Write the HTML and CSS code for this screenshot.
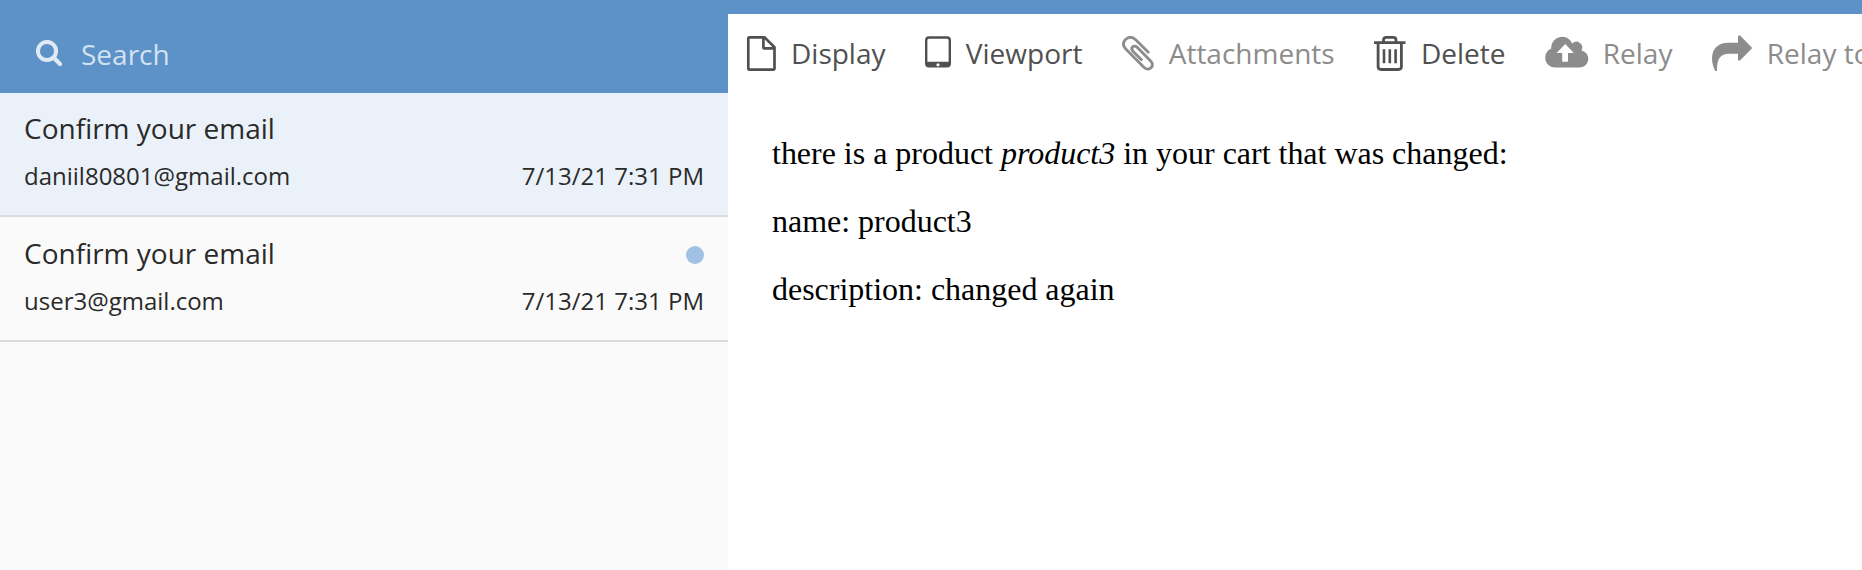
FILE: index.html
```html
<!DOCTYPE html>
<html lang="en">
<head>
<meta charset="utf-8">
<title>Mail</title>
<link rel="stylesheet" href="styles.css">
</head>
<body>
<div class="app">
  <aside class="sidebar">
    <div class="search">
      <svg class="search-icon" width="26" height="26" viewBox="0 0 26 26"><circle cx="11" cy="11" r="9.1" fill="none" stroke="currentColor" stroke-width="4"/><path d="M17.5 17.5L24 24" stroke="currentColor" stroke-width="4.2" stroke-linecap="round"/></svg>
      <span class="search-label">Search</span>
    </div>
    <div class="message selected">
      <div class="line"><span class="subject">Confirm your email</span></div>
      <div class="line meta"><span>daniil80801@gmail.com</span><span>7/13/21 7:31 PM</span></div>
    </div>
    <div class="message">
      <div class="line"><span class="subject">Confirm your email</span><span class="unread"></span></div>
      <div class="line meta"><span>user3@gmail.com</span><span>7/13/21 7:31 PM</span></div>
    </div>
  </aside>
  <main class="content">
    <nav class="toolbar">
      <div class="tool">
        <svg width="29" height="36" viewBox="0 0 29 36"><path d="M2.6 1.3H17.5L27.5 11.3V32.3Q27.5 33.6 26.2 33.6H2.6Q1.3 33.6 1.3 32.3V2.6Q1.3 1.3 2.6 1.3ZM16.4 1.5V11.4Q16.4 12.4 17.4 12.4H27.5" fill="none" stroke="currentColor" stroke-width="2.7"/></svg>
        <span>Display</span>
      </div>
      <div class="tool">
        <svg width="26" height="36" viewBox="0 0 26 36"><path fill="currentColor" fill-rule="evenodd" d="M4 .3H22Q26 .3 26 4.3V27.5Q26 31.5 22 31.5H4Q0 31.5 0 27.5V4.3Q0 .3 4 .3ZM4 2.7Q2.4 2.7 2.4 4.3V25.7H23.6V4.3Q23.6 2.7 22 2.7ZM13 27.2A1.6 1.6 0 1 0 13 30.4A1.6 1.6 0 1 0 13 27.2Z"/></svg>
        <span>Viewport</span>
      </div>
      <div class="tool muted">
        <svg width="32" height="36" viewBox="0 0 32 36"><path d="M27 17L14 4C10.5 .7 6.7.4 3.7 3.3C.6 6.4.9 10 3.8 12.9L21.6 30.9C24.3 33.6 27 33.8 29 31.8C31 29.8 30.8 27.2 28.2 24.6L15.4 11.6C13.6 9.8 11.8 9.7 10.7 10.8C9.4 12.1 9.6 13.9 11.2 15.5L20.2 24.6" fill="none" stroke="currentColor" stroke-width="2.8"/></svg>
        <span>Attachments</span>
      </div>
      <div class="tool">
        <svg width="32" height="36" viewBox="0 0 32 36"><path d="M0 6.7H31.5M9.5 6.7V4.2Q9.5 1.4 12.3 1.4H19.2Q22 1.4 22 4.2V6.7M4.1 7V30.5Q4.1 33.5 7.1 33.5H24.4Q27.4 33.5 27.4 30.5V7" fill="none" stroke="currentColor" stroke-width="2.8"/><path d="M10 13.3V27.3M15.8 13.3V27.3M21.6 13.3V27.3" fill="none" stroke="currentColor" stroke-width="2.6"/></svg>
        <span>Delete</span>
      </div>
      <div class="tool muted">
        <svg width="43" height="36" viewBox="0 0 43 36"><path fill="currentColor" fill-rule="evenodd" d="M10 31.6A10 10 0 0 1 6.2 12.4V11.4A11 11 0 0 1 27.3 7.4A5.8 5.8 0 0 1 36.4 14.4A8.7 8.7 0 0 1 34.3 31.6ZM20.3 8L11.5 17H17.2V25.8H23V17H28.8Z"/></svg>
        <span>Relay</span>
      </div>
      <div class="tool muted">
        <svg width="40" height="38" viewBox="0 0 40 38"><path fill="currentColor" d="M28 -.5L39.6 11.2Q40.2 12 39.6 12.8L28.2 24.2Q26.3 25.4 26 23.4V17.8H17C8.5 17.8 4.7 22.6 5 35H3.3C1.5 31.7 0 27 0 23C0 12.6 6 6.7 16.5 6.7H26V1Q26.3-1.4 28 -.5Z"/></svg>
        <span>Relay to</span>
      </div>
    </nav>
    <article class="mail">
      <p>there is a product <i>product3</i> in your cart that was changed:</p>
      <p>name: product3</p>
      <p>description: changed again</p>
    </article>
  </main>
</div>
</body>
</html>
```
FILE: styles.css
```css
* { box-sizing: border-box; }
body { margin: 0; font-family: "Open Sans", sans-serif; color: #2a2a2a; overflow: hidden; }
.app { display: flex; height: 570px; background: #5c92c8; }
.sidebar { width: 728px; flex: none; background: #fafafa; }
.search { display: flex; align-items: flex-start; height: 93px; padding: 40px 0 0 36px; background: #5c92c8; color: #dfeaf5; font-size: 28px; line-height: 38px; }
.search-icon { flex: none; margin-right: 19px; }
.search-label { margin-top: -5px; color: #d3e2f1; }
.message { height: 125px; padding: 17px 24px 0; border-bottom: 2px solid #dadbdc; }
.selected { height: 124px; padding-top: 16px; background: #eaf1f9; }
.line { display: flex; justify-content: space-between; align-items: center; height: 38px; font-size: 28px; line-height: 38px; }
.meta { height: 32px; margin-top: 13px; font-size: 24px; line-height: 32px; }
.unread { width: 18px; height: 18px; margin-top: 3px; border-radius: 50%; background: #a0c1e2; }
.content { flex: 1; min-width: 0; margin-top: 14px; background: #fff; overflow: hidden; }
.toolbar { display: flex; gap: 39.3px; padding: 20px 0 0 19px; height: 80px; color: #505050; font-size: 28px; line-height: 38px; white-space: nowrap; }
.tool { display: flex; flex: none; align-items: flex-start; gap: 15px; }
.tool svg { flex: none; margin-top: 2px; overflow: visible; }
.muted { color: #8c8c8c; }
.mail { padding: 41px 44px; font-family: "Liberation Serif", serif; font-size: 32px; line-height: 36px; letter-spacing: -0.015px; color: #000; }
.mail p { margin: 0 0 32px; }
```
